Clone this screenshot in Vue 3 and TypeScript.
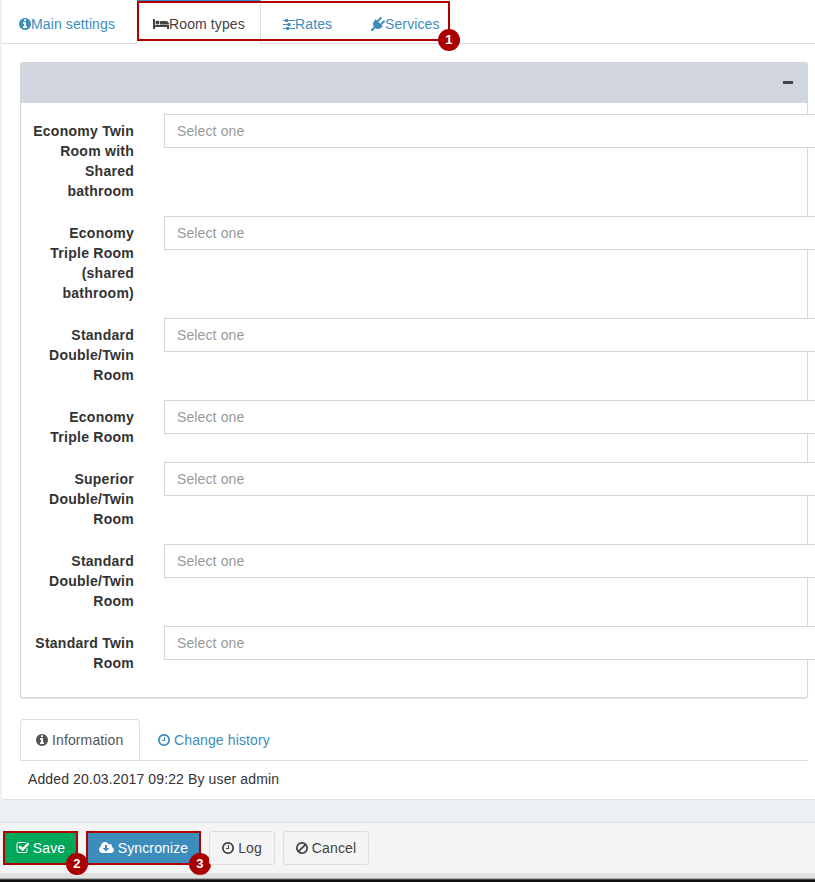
<script setup lang="ts">
const rooms: string[] = [
  'Economy Twin Room with Shared bathroom',
  'Economy Triple Room (shared bathroom)',
  'Standard Double/Twin Room',
  'Economy Triple Room',
  'Superior Double/Twin Room',
  'Standard Double/Twin Room',
  'Standard Twin Room',
];

// font-awesome 4 glyph outlines
const infoCircle = 'M1152 1376v-160q0-14-9-23t-23-9h-96v-512q0-14-9-23t-23-9h-320q-14 0-23 9t-9 23v160q0 14 9 23t23 9h96v320h-96q-14 0-23 9t-9 23v160q0 14 9 23t23 9h448q14 0 23-9t9-23zm-128-896v-160q0-14-9-23t-23-9h-192q-14 0-23 9t-9 23v160q0 14 9 23t23 9h192q14 0 23-9t9-23zm640 416q0 209-103 385.500t-279.500 279.500-385.500 103-385.500-103-279.500-279.500-103-385.500 103-385.500 279.500-279.500 385.500-103 385.500 103 279.500 279.500 103 385.500z';
const bed = 'M256 1024h1728q26 0 45 19t19 45v448h-256v-256h-1536v256h-256v-1216q0-26 19-45t45-19h128q26 0 45 19t19 45v704zm576-320q0-106-75-181t-181-75-181 75-75 181 75 181 181 75 181-75 75-181zm1216 256v-64q0-159-112.500-271.500t-271.500-112.500h-704q-26 0-45 19t-19 45v384h1152z';
const sliders = 'M480 1408v128h-352v-128h352zm352-128q26 0 45 19t19 45v256q0 26-19 45t-45 19h-256q-26 0-45-19t-19-45v-256q0-26 19-45t45-19h256zm160-384v128h-864v-128h864zm-640-512v128h-224v-128h224zm1312 1024v128h-736v-128h736zm-960-1152q26 0 45 19t19 45v256q0 26-19 45t-45 19h-256q-26 0-45-19t-19-45v-256q0-26 19-45t45-19h256zm320 512q26 0 45 19t19 45v256q0 26-19 45t-45 19h-256q-26 0-45-19t-19-45v-256q0-26 19-45t45-19h256zm640 128v128h-224v-128h224zm0-512v128h-864v-128h864z';
const plug = 'M1755 453q37 38 37 90.500t-37 90.500l-401 400 150 150-160 160q-163 163-389.500 186.500t-411.500-100.500l-362 362h-181v-181l362-362q-124-185-100.500-411.500t186.500-389.500l160-160 150 150 400-401q38-37 91-37t90 37 37 90.500-37 90.500l-400 401 234 234 401-400q38-37 91-37t90 37z';
const clock = 'M1024 544v448q0 14-9 23t-23 9h-320q-14 0-23-9t-9-23v-64q0-14 9-23t23-9h224v-352q0-14 9-23t23-9h64q14 0 23 9t9 23zm416 352q0-148-73-273t-198-198-273-73-273 73-198 198-73 273 73 273 198 198 273 73 273-73 198-198 73-273zm224 0q0 209-103 385.500t-279.500 279.500-385.500 103-385.500-103-279.500-279.500-103-385.500 103-385.500 279.500-279.500 385.500-103 385.500 103 279.500 279.500 103 385.500z';
const ban = 'M1440 893q0-161-87-295l-754 753q137 89 297 89 111 0 211.500-43.500t173.500-116.500 116-174.500 43-212.500zm-999 299l755-754q-135-91-300-91-148 0-273 73t-198 199-73 274q0 162 89 299zm1223-299q0 157-61 300t-163.500 246-245 164-298.500 61-298.500-61-245-164-163.500-246-61-300 61-299.500 163.500-245.500 245-164 298.500-61 298.500 61 245 164 163.500 245.500 61 299.500z';
const checkSquare = 'M1472 930v318q0 119-84.500 203.500t-203.500 84.500h-832q-119 0-203.500-84.500t-84.500-203.500v-832q0-119 84.500-203.500t203.500-84.500h832q63 0 117 25 15 7 18 23 3 17-9 29l-49 49q-10 10-23 10-3 0-9-2-23-6-45-6h-832q-66 0-113 47t-47 113v832q0 66 47 113t113 47h832q66 0 113-47t47-113v-254q0-13 9-22l64-64q10-10 23-10 6 0 12 3 20 8 20 29zm231-489l-814 814q-24 24-57 24t-57-24l-430-430q-24-24-24-57t24-57l110-110q24-24 57-24t57 24l263 263 647-647q24-24 57-24t57 24l110 110q24 24 24 57t-24 57z';
const cloud = 'M1280 928q0-14-9-23t-23-9h-224v-352q0-13-9.500-22.500t-22.500-9.500h-192q-13 0-22.500 9.500t-9.500 22.500v352h-224q-13 0-22.500 9.500t-9.500 22.500q0 14 9 23l352 352q9 9 23 9t23-9l351-351q10-12 10-24zm640 224q0 159-112.500 271.500t-271.500 112.500h-1088q-185 0-316.500-131.500t-131.500-316.500q0-130 70-240t188-165q-2-30-2-43 0-212 150-362t362-150q156 0 285.500 87t188.500 231q71-62 166-62 106 0 181 75t75 181q0 76-41 138 130 31 213.500 135.500t83.500 238.500z';
</script>

<template>
  <div class="page">
    <div class="main">
      <ul class="tabs">
        <li class="tab first">
          <a class="link"><svg class="ic" width="12" height="14" viewBox="128 0 1536 1792"><path fill="currentColor" :d="infoCircle" /></svg>Main settings</a>
        </li>
        <li class="tab active">
          <a class="link"><svg class="ic" width="16" height="14" viewBox="0 0 2048 1792"><path fill="currentColor" :d="bed" /></svg>Room types</a>
        </li>
        <li class="tab rates">
          <a class="link"><svg class="ic" width="12" height="14" viewBox="128 0 1536 1792"><path fill="currentColor" :d="sliders" /></svg>Rates</a>
        </li>
        <li class="tab">
          <a class="link"><svg class="ic" width="14" height="14" viewBox="0 0 1792 1792"><path fill="currentColor" :d="plug" /></svg>Services</a>
        </li>
      </ul>

      <div class="content">
        <section class="panel">
          <header class="panel-head"><span class="collapse"></span></header>
          <div class="panel-body">
            <div v-for="(room, i) in rooms" :key="i" class="row">
              <label class="name">{{ room }}</label>
              <div class="select">Select one</div>
            </div>
          </div>
        </section>

        <ul class="subtabs">
          <li class="subtab active">
            <svg class="sub-ic" width="12" height="14" viewBox="128 0 1536 1792"><path fill="currentColor" :d="infoCircle" /></svg>Information
          </li>
          <li class="subtab">
            <svg class="sub-ic" width="12" height="14" viewBox="128 0 1536 1792"><path fill="currentColor" :d="clock" /></svg>Change history
          </li>
        </ul>
        <p class="added">Added 20.03.2017 09:22 By user admin</p>
      </div>
    </div>

    <div class="gap"></div>

    <footer class="actions">
      <button class="btn save"><svg class="sub-ic" width="13" height="14" viewBox="0 0 1664 1792"><path fill="currentColor" :d="checkSquare" /></svg>Save<i class="badge">2</i></button>
      <button class="btn sync"><svg class="sub-ic" width="15" height="14" viewBox="0 0 1920 1792"><path fill="currentColor" :d="cloud" /></svg>Syncronize<i class="badge">3</i></button>
      <button class="btn log"><svg class="sub-ic" width="12" height="14" viewBox="128 0 1536 1792"><path fill="currentColor" :d="clock" /></svg>Log</button>
      <button class="btn cancel"><svg class="sub-ic" width="12" height="14" viewBox="128 0 1536 1792"><path fill="currentColor" :d="ban" /></svg>Cancel</button>
    </footer>
    <div class="bottom-edge"></div>

    <div class="mark-tabs"><i class="badge">1</i></div>
  </div>
</template>

<style>
html, body {
  margin: 0;
  background: #ecf0f5;
}
</style>

<style scoped>
.page {
  position: relative;
  width: 815px;
  height: 882px;
  overflow: hidden;
  background: #ecf0f5;
  font-family: "Liberation Sans", Arial, sans-serif;
  font-size: 14px;
  line-height: 20px;
  letter-spacing: .12px;
  color: #333;
}
.main {
  margin-left: 2px;
  height: 800px;
  box-sizing: border-box;
  background: #fff;
  border-radius: 0 0 0 3px;
  border-bottom: 1px solid #dcdfe3;
}
.tabs {
  display: flex;
  list-style: none;
  margin: 0;
  padding: 0;
  height: 44px;
  box-sizing: border-box;
  border-bottom: 1px solid #ddd;
}
.tab {
  padding: 14px 15px 0;
  height: 44px;
  box-sizing: border-box;
}
.tab.first {
  padding-left: 17px;
  width: 135px;
}
.link {
  color: #3c8dbc;
  white-space: nowrap;
}
.ic {
  vertical-align: -2px;
}
.tab.active {
  position: relative;
  width: 124px;
  padding-left: 16px;
  background: #fff;
  border-top: 1px solid #3c8dbc;
  border-right: 1px solid #ddd;
  height: 45px;
  padding-top: 13px;
}
.tab.active .link {
  color: #444;
}
.tab.rates {
  width: 95px;
  padding-left: 22px;
}
.content {
  padding: 18px 7px 0 18px;
}
.panel {
  background: #fff;
  border: 1px solid #d2d6de;
  border-top: 0;
  border-radius: 3px;
  box-shadow: 0 1px 1px rgba(0, 0, 0, .1);
  height: 636px;
  box-sizing: border-box;
}
.panel-head {
  height: 41px;
  margin: 0 -1px;
  background: #d2d6de;
  border-radius: 3px 3px 0 0;
  display: flex;
  justify-content: flex-end;
  align-items: center;
  padding-right: 15px;
}
.collapse {
  width: 10px;
  height: 3px;
  background: #444;
}
.panel-body {
  padding-top: 11px;
}
.row {
  display: flex;
  margin-bottom: 15px;
  align-items: flex-start;
}
.name {
  width: 104px;
  margin-left: 9px;
  padding-top: 7px;
  text-align: right;
  font-weight: 700;
  letter-spacing: .25px;
  flex: none;
}
.select {
  flex: none;
  width: 680px;
  height: 34px;
  margin-left: 30px;
  padding: 6px 12px;
  box-sizing: border-box;
  background: #fff;
  border: 1px solid #d2d6de;
  color: #999;
}
.subtabs {
  display: flex;
  list-style: none;
  margin: 20px 0 0;
  padding: 0;
  height: 43px;
  box-sizing: border-box;
  border-bottom: 1px solid #ddd;
}
.subtab {
  padding: 12px 15px 12px 18px;
  color: #3c8dbc;
  height: 43px;
  box-sizing: border-box;
}
.subtab.active {
  width: 120px;
  flex: none;
  margin-top: 1px;
  color: #555;
  background: #fff;
  border: 1px solid #ddd;
  border-bottom: 0;
  border-radius: 4px 4px 0 0;
  height: 41px;
  padding: 10px 0 10px 15px;
}
.sub-ic {
  vertical-align: -2px;
  margin-right: 4px;
}
.added {
  margin: 8px 0 0 8px;
}
.gap {
  height: 22px;
}
.actions {
  display: flex;
  gap: 8px;
  height: 51px;
  box-sizing: border-box;
  padding: 8px 0 0 3px;
  background: #f4f4f4;
  border-top: 1px solid #ddd;
}
.btn {
  position: relative;
  height: 34px;
  padding: 0;
  box-sizing: border-box;
  font: inherit;
  letter-spacing: inherit;
  border: 1px solid #ddd;
  border-radius: 3px;
  color: #444;
  background: #f4f4f4;
  white-space: nowrap;
}
.save {
  width: 75px;
  color: #fff;
  background: #00a65a;
  border: 2px solid #b00000;
  border-radius: 0;
}
.sync {
  width: 115px;
  color: #fff;
  background: #3c8dbc;
  border: 2px solid #b00000;
  border-radius: 0;
}
.log {
  width: 66px;
}
.cancel {
  width: 86px;
}
.bottom-edge {
  height: 9px;
  background: linear-gradient(#e0e0e0 0 5px, #777 6px, #111 7px);
}
.mark-tabs {
  position: absolute;
  left: 137px;
  top: 1px;
  width: 313px;
  height: 40px;
  box-sizing: border-box;
  border: 2px solid #b00000;
}
.badge {
  position: absolute;
  right: -12px;
  bottom: -12px;
  width: 22px;
  height: 22px;
  border-radius: 50%;
  background: #a80000;
  color: #fff;
  font: 700 13px/22px "Liberation Sans", sans-serif;
  text-align: center;
}
</style>
